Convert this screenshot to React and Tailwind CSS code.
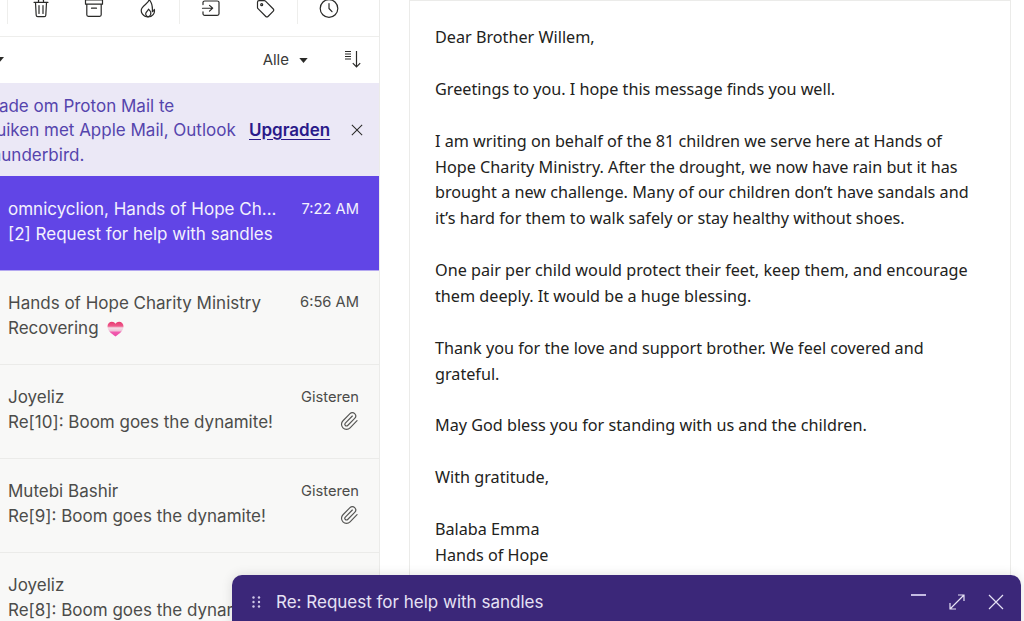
import React from "react";
import { Paperclip } from "lucide-react";

const Ic = ({ children, className = "" }) => (
  <svg viewBox="0 0 20 20" fill="none" stroke="currentColor" strokeWidth="1.2" strokeLinecap="round" strokeLinejoin="round" className={"w-5 h-5 text-[#2a2a28] " + className}>{children}</svg>
);

const Sep = () => <div className="w-px h-6 bg-[#eeeeec] self-start" />;

const Row = ({ name, subject, time, clip, heart }) => (
  <div className="h-[94px] shrink-0 bg-[#f8f8f7] border-b border-[#ebebe9] pl-2 pr-5 pt-[20.400px] flex justify-between text-[#4c4c4a]">
    <div className="leading-[25px] text-[17px] whitespace-nowrap">
      <div>{name}</div>
      <div className="flex items-center gap-[8px]">{subject}{heart && <Heart />}</div>
    </div>
    <div className="flex flex-col items-end text-[14.700px] leading-[25px]">
      <div className={time === "Gisteren" ? "-mt-[0.5px]" : "-mt-[1px]"}>{time}</div>
      {clip && <Paperclip size={20} strokeWidth={1.4} className="mt-[1px] mr-[0.5px] text-[#555553]" />}
    </div>
  </div>
);

const Heart = () => (
  <svg viewBox="0 0 18 17" className="w-[17px] h-[16px]">
    <defs>
      <linearGradient id="hg" x1="0" y1="0" x2="0" y2="1">
        <stop offset="0" stopColor="#e8386f" />
        <stop offset="0.3" stopColor="#ee5a8c" />
        <stop offset="0.42" stopColor="#f3dfe6" />
        <stop offset="0.6" stopColor="#efc3d8" />
        <stop offset="0.72" stopColor="#f25aae" />
        <stop offset="1" stopColor="#ec4aa5" />
      </linearGradient>
    </defs>
    <path d="M9 16.500C4 13 .5 10 .5 5.600.5 2.600 2.800.7 5.200.7 6.800.7 8.200 1.500 9 2.800 9.800 1.500 11.200.7 12.800.7c2.400 0 4.700 1.900 4.700 4.900C17.500 10 14 13 9 16.500Z" fill="url(#hg)" />
  </svg>
);

const lines = [
  ["Dear Brother Willem,"],
  ["Greetings to you. I hope this message finds you well."],
  ["I am writing on behalf of the 81 children we serve here at Hands of", "Hope Charity Ministry. After the drought, we now have rain but it has", "brought a new challenge. Many of our children don’t have sandals and", "it’s hard for them to walk safely or stay healthy without shoes."],
  ["One pair per child would protect their feet, keep them, and encourage", "them deeply. It would be a huge blessing."],
  ["Thank you for the love and support brother. We feel covered and", "grateful."],
  ["May God bless you for standing with us and the children."],
  ["With gratitude,"],
  ["Balaba Emma", "Hands of Hope"],
];

export default function App() {
  return (
    <div className="relative h-[621px] w-[1024px] overflow-hidden bg-white flex font-['Inter',sans-serif]">
      <div className="w-[380px] shrink-0 border-r border-[#ebebe9] flex flex-col overflow-hidden">
        <div className="h-[37px] shrink-0 border-b border-[#eeeeec] flex items-start pl-[7px]">
          <Sep />
          <div className="w-[171px] flex justify-between pl-[23px] pr-[21px] -mt-[1.500px]">
            <Ic><path d="M3 3.300h14M7.500 3.200V1.500a1 1 0 0 1 1-1h3a1 1 0 0 1 1 1v1.700M4.500 3.500l.7 12.800a1.500 1.500 0 0 0 1.500 1.400h6.600a1.500 1.500 0 0 0 1.500-1.400l.7-12.800M8 6.500v8M12 6.500v8" /></Ic>
            <Ic className="-ml-[3px]"><path d="M1.500 1h17v4.200h-17zM2.800 5.200v10.600a1.500 1.500 0 0 0 1.500 1.500h11.400a1.500 1.500 0 0 0 1.500-1.500V5.200M7.500 9.200h5" /></Ic>
            <Ic className="-ml-[2px]"><path d="M11 .5c.6 3-5.800 5.400-7.300 9.100-1.600 3.700 1.600 8.400 6.300 8.400 4.400 0 7.300-3.600 6.300-7.700-.3 1-1 1.800-2 2.400.4-4.600-.8-9.700-3.300-12.200Z" /><path d="M10.200 17.800c-2.100-.4-3-2.400-2.200-4.100.6-1.300 2.100-2.300 2.500-3.600 1.500 1.300 2.800 3.300 2.200 5.200-.3 1.200-1.200 2.100-2.500 2.500Z" /></Ic>
          </div>
          <Sep />
          <div className="w-[117px] flex justify-between pl-[21px] pr-[21px] -mt-[1.500px]">
            <Ic><path d="M2 6V3.700A1.700 1.700 0 0 1 3.700 2h12.600A1.700 1.700 0 0 1 18 3.700v12.600a1.700 1.700 0 0 1-1.700 1.700H3.700A1.700 1.700 0 0 1 2 16.300V14M1.500 10h10M8.500 6.800l3.200 3.200-3.200 3.200" transform="translate(0 .2) scale(1 .9)" /></Ic>
            <Ic><path d="M1.500 3.200v5.300c0 .5.200.9.500 1.200l7.800 7.800c.6.600 1.600.6 2.200 0l5.300-5.300c.6-.6.600-1.600 0-2.200L9.500 2.200a1.700 1.700 0 0 0-1.200-.5H3a1.500 1.500 0 0 0-1.500 1.500Z" /><circle cx="5.700" cy="5.700" r="1" /></Ic>
          </div>
          <Sep />
          <div className="pl-[21px] -mt-[1.500px]">
            <Ic><circle cx="10" cy="9.500" r="8.800" /><path d="M10 4.500v5l3 3.200" /></Ic>
          </div>
        </div>

        <div className="h-[46px] shrink-0 bg-white flex items-center justify-end pr-[17px] relative">
          <svg viewBox="0 0 10 6" className="w-[10px] h-[6px] absolute -left-[6px] top-[20px]"><path d="M0 0h10L5 6Z" fill="#2a2a28" /></svg>
          <span className="text-[15px] text-[#3a3a38] mr-[10px] mt-[1px]">Alle</span>
          <svg viewBox="0 0 10 6" className="w-[9px] h-[5px] mr-[36px]"><path d="M0 0h10L5 6Z" fill="#2a2a28" /></svg>
          <svg viewBox="0 0 18 18" className="w-[18px] h-[18px] text-[#2a2a28] -mt-[3px]" fill="none" stroke="currentColor">
            <path d="M1 1.500h6M1 4h6M1 6.500h6M1 9h6" strokeWidth="1" />
            <path d="M12.500 1v16M8.800 13.200l3.700 3.800 3.700-3.800" strokeWidth="1.200" />
          </svg>
        </div>

        <div className="h-[93px] shrink-0 bg-[#ebe8f6] flex items-center text-[#5544ad] text-[17px] leading-[24.500px] relative overflow-hidden">
          <div className="-ml-[41px] whitespace-nowrap shrink-0 w-[325px] mt-[2px]">
            <div>Upgrade om Proton Mail te</div>
            <div>gebruiken met Apple Mail, Outlook</div>
            <div>of Thunderbird.</div>
          </div>
          <a className="font-semibold text-[#2a1a8a] underline underline-offset-[3px] ml-[-35px] relative mt-[1px]">Upgraden</a>
          <svg viewBox="0 0 14 14" className="w-[12px] h-[12px] ml-[21px] text-[#2a2a28] mt-[1px]" fill="none" stroke="currentColor" strokeWidth="1.200"><path d="M1 1l12 12M13 1L1 13" /></svg>
        </div>

        <div className="h-[95px] shrink-0 bg-[#6145e6] pl-2 pr-5 pt-[21px] flex justify-between text-[#f3f1fd] border-b border-[#b5a8f0]">
          <div className="leading-[25px] text-[17px] whitespace-nowrap">
            <div>omnicyclion, Hands of Hope Ch...</div>
            <div>[2] Request for help with sandles</div>
          </div>
          <div className="text-[14.700px] leading-[25px] -mt-[0.5px]">7:22 AM</div>
        </div>

        <Row name="Hands of Hope Charity Ministry" subject="Recovering" time="6:56 AM" heart />
        <Row name="Joyeliz" subject="Re[10]: Boom goes the dynamite!" time="Gisteren" clip />
        <Row name="Mutebi Bashir" subject="Re[9]: Boom goes the dynamite!" time="Gisteren" clip />
        <Row name="Joyeliz" subject="Re[8]: Boom goes the dynamite!" time="Gisteren" clip />
      </div>

      <div className="flex-1 min-w-0 pl-[29px] pr-[13px] bg-white">
        <div className="h-[640px] border border-[#ebebe9] pl-[25px] pt-[24px] font-['Noto_Sans',sans-serif] text-[16.200px] leading-[25.850px] text-[#222220] whitespace-nowrap flex flex-col gap-[26px] overflow-hidden">
          {lines.map((p, i) => (
            <div key={i}>{p.map((l, j) => <div key={j}>{l}</div>)}</div>
          ))}
        </div>
      </div>

      <div className="absolute left-[232px] top-[575px] w-[789px] h-[60px] rounded-t-[10px] bg-[#3b2779] shadow-[0_0_12px_rgba(0,0,0,0.12)] flex items-start pt-[14px] text-[#e6e2f5]">
        <svg viewBox="0 0 9 12" className="w-[9px] h-[12px] ml-[20px] mt-[7px]" fill="#cfc8e8">
          <circle cx="1.500" cy="1.500" r="1.200" /><circle cx="7" cy="1.500" r="1.200" />
          <circle cx="1.500" cy="6" r="1.200" /><circle cx="7" cy="6" r="1.200" />
          <circle cx="1.500" cy="10.500" r="1.200" /><circle cx="7" cy="10.500" r="1.200" />
        </svg>
        <span className="ml-[15px] text-[17px] leading-[26px]">Re: Request for help with sandles</span>
        <div className="ml-auto mr-[17px] flex items-start text-[#e6e2f5]">
          <div className="w-[15px] h-[1.500px] bg-[#c4bbe2] mt-[5px] mr-[23px]" />
          <svg viewBox="0 0 16 16" className="w-[16px] h-[16px] mt-[5px] mr-[23px]" fill="none" stroke="currentColor" strokeWidth="1.200"><path d="M1 15L15 1M9 1h6v6M1 9v6h6" /></svg>
          <svg viewBox="0 0 16 16" className="w-[16px] h-[16px] mt-[5px]" fill="none" stroke="currentColor" strokeWidth="1.200"><path d="M1 1l14 14M15 1L1 15" /></svg>
        </div>
      </div>
    </div>
  );
}
